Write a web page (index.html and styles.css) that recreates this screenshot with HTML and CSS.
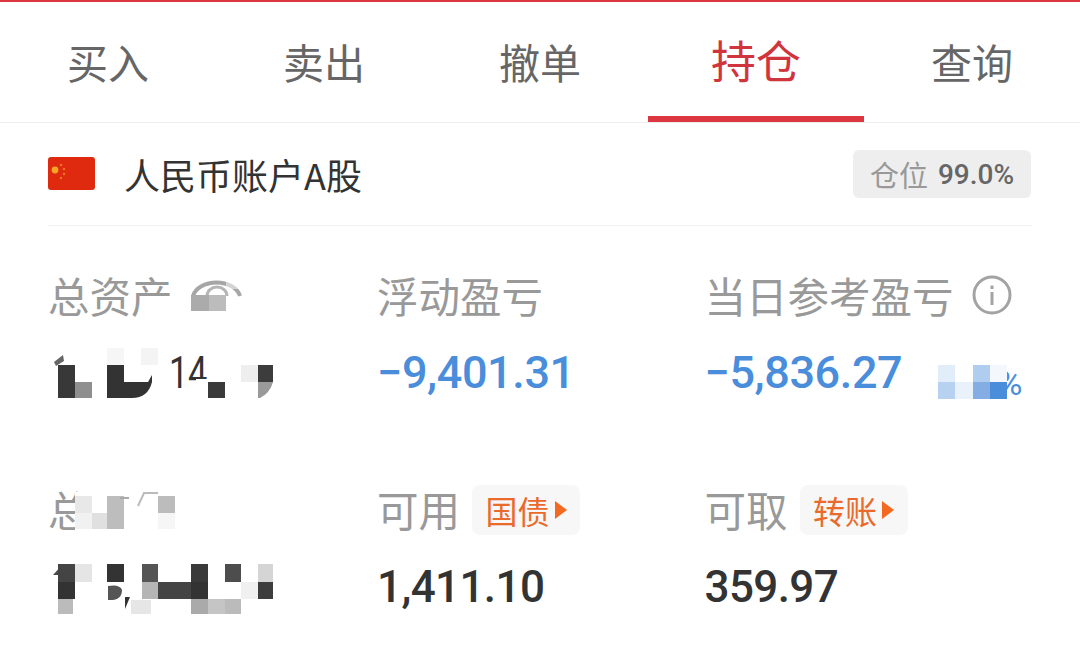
FILE: index.html
```html
<!DOCTYPE html>
<html lang="zh-CN">
<head>
    <meta charset="UTF-8">
    <meta name="viewport" content="width=device-width, initial-scale=1.0">
    <title>持仓</title>
    <link rel="stylesheet" href="styles.css">
</head>
<body>
    <div class="page">
        <!-- Tabs -->
        <div class="tabs">
            <div class="tab">买入</div>
            <div class="tab">卖出</div>
            <div class="tab">撤单</div>
            <div class="tab active">持仓</div>
            <div class="tab">查询</div>
        </div>

        <!-- Account row -->
        <div class="account">
            <svg class="flag" viewBox="0 0 47 33" width="47" height="33">
                <rect width="47" height="33" rx="3" fill="#df2a10"/>
                <circle cx="7" cy="13" r="3.4" fill="#f5a623"/>
                <circle cx="13" cy="8" r="1.2" fill="#ee7a1c"/>
                <circle cx="16" cy="12" r="1.2" fill="#ee7a1c"/>
                <circle cx="16" cy="17" r="1.2" fill="#ee7a1c"/>
                <circle cx="13" cy="21" r="1.2" fill="#ee7a1c"/>
            </svg>
            <div class="account-name">人民币账户A股</div>
            <div class="position">
                <span class="position-label">仓位</span>
                <span class="position-value">99.0%</span>
            </div>
        </div>

        <!-- Stats -->
        <div class="stats">
            <div class="stat">
                <div class="label">总资产
                    <svg class="eye" viewBox="0 0 52 36" width="52" height="36">
                        <path d="M3 19 A24 17 0 0 1 50 19" fill="none" stroke="#a6a6a6" stroke-width="4"/>
                        <path d="M17 19 A10 9 0 0 1 37 19" fill="none" stroke="#b5b5b5" stroke-width="3"/>
                        <rect x="36" y="0" width="18" height="12" fill="#fff" opacity="0.5"/>
                        <rect x="1" y="18" width="18" height="16" fill="#ababab"/>
                        <rect x="19" y="18" width="17" height="16" fill="#bcbcbc"/>
                    </svg>
                </div>
                <div class="value">
                    <svg class="mosaic" viewBox="0 0 240 52" width="240" height="52">
                        <path d="M6 14 L15 7 L16 13 L8 18 Z" fill="#666"/>
                        <rect x="10" y="17" width="17" height="33" fill="#383838"/>
                        <rect x="27" y="34" width="17" height="16" fill="#8f8f8f"/>
                        <rect x="59" y="0" width="17" height="17" fill="#f6f6f6"/>
                        <rect x="93" y="0" width="17" height="17" fill="#f4f4f4"/>
                        <path d="M59 17 H76 V34 H100 L104 27 V34 Q100 50 84 50 H59 Z" fill="#333"/>
                        <text class="mosaic-text" x="121" y="40" textLength="38" lengthAdjust="spacingAndGlyphs">14</text>
                        <rect x="148" y="31" width="12" height="12" fill="#fff"/>
                        <rect x="160" y="34" width="17" height="16" fill="#3a3a3a"/>
                        <rect x="193" y="17" width="17" height="17" fill="#eeeeee"/>
                        <rect x="210" y="17" width="15" height="17" fill="#3c3c3c"/>
                        <path d="M210 34 H225 Q222 45 212 50 H210 Z" fill="#9a9a9a"/>
                    </svg>
                </div>
            </div>
            <div class="stat">
                <div class="label">浮动盈亏</div>
                <div class="value loss">−9,401.31</div>
            </div>
            <div class="stat">
                <div class="label">当日参考盈亏
                    <svg class="info" viewBox="0 0 40 40" width="40" height="40">
                        <circle cx="20" cy="20" r="18" fill="none" stroke="#a3a3a3" stroke-width="3"/>
                        <rect x="18.5" y="17" width="3" height="13" fill="#a3a3a3"/>
                        <rect x="18.5" y="10.5" width="3" height="3.5" fill="#a3a3a3"/>
                    </svg>
                </div>
                <div class="value loss">−5,836.27
                    <span class="percent">%</span>
                    <svg class="mosaic-blue" viewBox="0 0 69 34" width="69" height="34">
                        <rect width="17" height="17" fill="#e1edf9"/>
                        <rect x="35" width="17" height="17" fill="#afcdee"/>
                        <rect x="52" width="17" height="17" fill="#f4f8fc"/>
                        <rect y="17" width="17" height="17" fill="#b6d2f0"/>
                        <rect x="17" y="17" width="18" height="17" fill="#e9f2fb"/>
                        <rect x="35" y="17" width="17" height="17" fill="#84ade3"/>
                        <rect x="52" y="17" width="17" height="17" fill="#4a8ddb"/>
                    </svg>
                </div>
            </div>

            <div class="stat">
                <div class="label masked">总
                    <svg class="mosaic-label" viewBox="0 0 105 40" width="105" height="40">
                        <rect width="105" height="40" fill="#fff"/>
                        <rect x="0" y="4" width="17" height="17" fill="#e8e8e8"/>
                        <rect x="0" y="21" width="17" height="16" fill="#f1f1f1"/>
                        <rect x="17" y="21" width="15" height="16" fill="#e0e0e0"/>
                        <rect x="32" y="4" width="17" height="33" fill="#bdbdbd"/>
                        <rect x="45" y="5" width="9" height="2" fill="#aaa"/>
                        <path d="M63 14 L69 1 H83" fill="none" stroke="#bbb" stroke-width="2"/>
                        <rect x="83" y="4" width="17" height="17" fill="#bcbcbc"/>
                        <rect x="83" y="21" width="17" height="16" fill="#f6f6f6"/>
                    </svg>
                </div>
                <div class="value">
                    <svg class="mosaic" viewBox="0 0 240 56" width="240" height="56">
                        <path d="M5 13 L15 2 H27 V13 Z" fill="#4a4a4a"/>
                        <rect x="10" y="2" width="17" height="18" fill="#444"/>
                        <rect x="27" y="2" width="17" height="18" fill="#e5e5e5"/>
                        <rect x="59" y="2" width="17" height="18" fill="#333"/>
                        <rect x="94" y="2" width="16" height="18" fill="#555"/>
                        <rect x="143" y="2" width="17" height="18" fill="#3a3a3a"/>
                        <rect x="177" y="2" width="16" height="18" fill="#4d4d4d"/>
                        <rect x="210" y="2" width="15" height="18" fill="#d5d5d5"/>
                        <rect x="10" y="20" width="17" height="17" fill="#333"/>
                        <path d="M60 24 Q72 22 74 28 Q74 39 60 38 Z" fill="#555"/>
                        <rect x="94" y="20" width="16" height="17" fill="#b5b5b5"/>
                        <rect x="110" y="20" width="33" height="17" fill="#444"/>
                        <rect x="143" y="20" width="17" height="17" fill="#333"/>
                        <rect x="193" y="20" width="17" height="17" fill="#f0f0f0"/>
                        <rect x="210" y="20" width="15" height="17" fill="#3d3d3d"/>
                        <rect x="10" y="37" width="15" height="15" fill="#bbb"/>
                        <path d="M77 35 H82 L77 47 Z" fill="#333"/>
                        <rect x="83" y="38" width="20" height="14" fill="#e6e6e6"/>
                        <rect x="143" y="37" width="17" height="15" fill="#aaa"/>
                        <rect x="160" y="37" width="17" height="15" fill="#c5c5c5"/>
                        <rect x="177" y="37" width="16" height="15" fill="#bbb"/>
                    </svg>
                </div>
            </div>
            <div class="stat">
                <div class="label">可用
                    <span class="chip">国债<i class="arrow"></i></span>
                </div>
                <div class="value amount">1,411.10</div>
            </div>
            <div class="stat">
                <div class="label">可取
                    <span class="chip">转账<i class="arrow"></i></span>
                </div>
                <div class="value amount">359.97</div>
            </div>
        </div>
    </div>
</body>
</html>
```

FILE: styles.css
```css
/* General Styles */
body {
    margin: 0;
    background: #fff;
    font-family: "Noto Sans CJK SC", "Noto Sans", sans-serif;
    color: #333;
}

.page {
    width: 1080px;
    height: 664px;
    overflow: hidden;
    border-top: 2px solid #dc3740;
    box-sizing: border-box;
}

/* Tabs */
.tabs {
    display: flex;
    height: 120px;
    border-bottom: 1px solid #eee;
}

.tab {
    flex: 1;
    box-sizing: border-box;
    height: 120px;
    line-height: 118px;
    text-align: center;
    font-size: 41px;
    color: #666;
}

.tab.active {
    line-height: 116px;
    font-size: 45px;
    color: #d0343c;
    border-bottom: 6px solid #dc3740;
}

/* Account row */
.account {
    display: flex;
    align-items: center;
    height: 102px;
    margin: 0 48px;
    border-bottom: 1px solid #f0f0f0;
}

.flag {
    flex: none;
    margin-right: 29px;
    margin-bottom: 2px;
}

.account-name {
    flex: 1;
    font-size: 36px;
    color: #333;
}

.position {
    display: flex;
    align-items: center;
    justify-content: center;
    gap: 10px;
    width: 178px;
    height: 48px;
    margin-right: 1px;
    background: #eee;
    border-radius: 6px;
}

.position-label {
    font-size: 29px;
    color: #999;
}

.position-value {
    font-family: Roboto, sans-serif;
    font-weight: 500;
    font-size: 28px;
    color: #666;
}

/* Stats */
.stats {
    display: grid;
    grid-template-columns: 329px 327.5px 1fr;
    row-gap: 86px;
    padding: 44px 0 0 48px;
}

.stat {
    position: relative;
}

.label {
    display: flex;
    align-items: center;
    height: 50px;
    font-size: 41.5px;
    color: #999;
    white-space: nowrap;
}

.value {
    position: relative;
    height: 50px;
    margin-top: 28px;
    line-height: 50px;
    font-family: Roboto, sans-serif;
    font-weight: 500;
    font-size: 45px;
    letter-spacing: -0.4px;
    color: #333;
    white-space: nowrap;
}

.amount {
    font-size: 44px;
    letter-spacing: -0.6px;
}

.loss {
    color: #4a8ddb;
}

.eye {
    margin-left: 17px;
}

.info {
    margin-left: 18px;
    margin-bottom: 0;
}

/* Mosaics over hidden numbers */
.mosaic {
    position: absolute;
    left: 0;
    top: 0;
}

.mosaic-text {
    font-family: Roboto, sans-serif;
    font-size: 44px;
    font-weight: 400;
    fill: #333;
}

.mosaic-label {
    position: absolute;
    left: 27px;
    top: 8px;
}

.mosaic-blue {
    position: absolute;
    left: 233.5px;
    top: 17px;
}

.percent {
    position: absolute;
    left: 293px;
    top: 10px;
    font-size: 34px;
    font-weight: 400;
}

/* Chips */
.chip {
    display: flex;
    align-items: center;
    justify-content: center;
    gap: 5px;
    width: 108px;
    height: 50px;
    margin-top: 2px;
    margin-left: 12px;
    background: #f7f7f7;
    border-radius: 8px;
    font-size: 32px;
    color: #ea6a2c;
}

.arrow {
    width: 0;
    height: 0;
    border-left: 12px solid #f5681f;
    border-top: 9px solid transparent;
    border-bottom: 9px solid transparent;
}
```
